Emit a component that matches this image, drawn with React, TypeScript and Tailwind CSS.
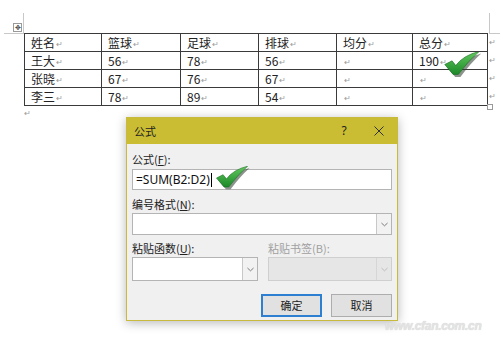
import React from "react";

const P = () => <span className="text-[8px] text-[#9a9a9a] align-middle ml-[1px]">↵</span>;

function Check({ className }: { className: string }) {
  return (
    <svg viewBox="0 0 36 24" className={className}>
      <defs>
        <linearGradient id="g" x1="0" y1="0" x2="0" y2="1">
          <stop offset="0" stopColor="#62c85e" />
          <stop offset="1" stopColor="#1c8a28" />
        </linearGradient>
      </defs>
      <path d="M1 13 L8 9.5 L11.5 14 Q19 4 34 0 Q24 9 14 22.5 L9 22.5 Z" fill="#2d3b2d" opacity="0.55" transform="translate(1.5 1.5)" />
      <path d="M0.5 12 L7.5 8.5 L11 13 Q18.5 3 33.5 -0.5 Q23.5 8 13.5 21.5 L8.5 21.5 Z" fill="url(#g)" stroke="#176d1f" strokeWidth="0.6" />
    </svg>
  );
}

const cols = [77, 79, 78, 78, 76, 75];
const rows = [
  ["姓名", "篮球", "足球", "排球", "均分", "总分"],
  ["王大", "56", "78", "56", "", "190"],
  ["张晓", "67", "76", "67", "", ""],
  ["李三", "78", "89", "54", "", ""],
];

function Arrow({ disabled }: { disabled?: boolean }) {
  return (
    <div className={`w-[15px] h-full border-l flex items-center justify-center ${disabled ? "border-[#d6d6d6] bg-[#e6e6e6]" : "border-[#c8c8c8] bg-[#f2f2f2]"}`}>
      <svg viewBox="0 0 8 5" className="w-[7px] h-[5px]">
        <path d="M0.5 0.8 L4 4 L7.5 0.8" fill="none" stroke={disabled ? "#b8b8b8" : "#6b6b6b"} strokeWidth="1" />
      </svg>
    </div>
  );
}

export default function App() {
  return (
    <div className="relative w-[500px] h-[343px] bg-white overflow-hidden text-[#222]" style={{ fontFamily: '"Noto Sans", "Noto Sans CJK SC", sans-serif' }}>
      {/* top corner marks */}
      <div className="absolute left-[4px] top-[33px] w-[20px] h-px bg-[#c8c8c8]" />
      <div className="absolute left-[23px] top-[13px] w-px h-[20px] bg-[#c8c8c8]" />
      <div className="absolute left-[489px] top-[13px] w-px h-[20px] bg-[#c8c8c8]" />
      <div className="absolute left-[489px] top-[33px] w-[11px] h-px bg-[#c8c8c8]" />
      {/* move handle */}
      <div className="absolute left-[13px] top-[23px] w-[9px] h-[9px] border border-[#9a9a9a] bg-white flex items-center justify-center text-[7px] leading-none text-[#444]">✥</div>

      <div className="pt-[33px] pl-[24px]">
        <div className="flex items-start">
          <table className="border-collapse text-[12px] leading-none" style={{ fontFamily: '"Noto Sans CJK SC", sans-serif' }}>
            <tbody>
              {rows.map((r, i) => (
                <tr key={i} className="h-[18px]">
                  {r.map((c, j) => (
                    <td key={j} style={{ width: cols[j] }} className="border border-[#3a3a3a] pl-[6px] p-0 align-middle">
                      {c}
                      <P />
                    </td>
                  ))}
                </tr>
              ))}
            </tbody>
          </table>
          <div className="flex flex-col ml-[1px] text-[8px] text-[#9a9a9a] leading-[18px]">
            <span>↵</span>
            <span>↵</span>
            <span>↵</span>
            <span>↵</span>
          </div>
        </div>
        <div className="text-[8px] text-[#9a9a9a] leading-none mt-[3px]">↵</div>
      </div>
      <div className="absolute left-[487px] top-[104px] w-[6px] h-[6px] border border-[#9a9a9a] bg-white" />

      <Check className="absolute left-[444px] top-[52px] w-[38px] h-[25px]" />

      {/* dialog */}
      <div className="absolute left-[126px] top-[117px] w-[272px] h-[204px] bg-[#f0f0f0] border border-[#c7ba3c] shadow-[0_2px_10px_rgba(0,0,0,0.28)] flex flex-col text-[11px]" style={{ fontFamily: '"Noto Sans CJK SC", sans-serif' }}>
        <div className="h-[26px] bg-[#cbbd33] flex items-center pl-[7px] pr-[13px] text-[11px] text-[#222]">
          <span className="flex-1">公式</span>
          <span className="w-[14px] text-center mr-[23px] text-[12px]" style={{ fontFamily: '"Noto Sans", sans-serif' }}>?</span>
          <svg viewBox="0 0 10 10" className="w-[10px] h-[10px]">
            <path d="M0.5 0.5 L9.5 9.5 M9.5 0.5 L0.5 9.5" stroke="#333" strokeWidth="1" />
          </svg>
        </div>
        <div className="flex flex-col px-[5px]">
          <div className="mt-[9px] h-[12px] leading-[12px]">公式(<span className="underline">F</span>):</div>
          <div className="mt-[4px] h-[21px] bg-white border border-[#b4b4b4] flex items-center pl-[3px] text-[12px] text-[#111]" style={{ fontFamily: '"Noto Sans", sans-serif' }}>
            =SUM(B2:D2)<span className="inline-block w-px h-[14px] bg-black ml-[1px]" />
          </div>
          <div className="mt-[8px] h-[12px] leading-[12px]">编号格式(<span className="underline">N</span>):</div>
          <div className="mt-[3px] h-[22px] bg-white border border-[#b4b4b4] flex justify-end">
            <Arrow />
          </div>
          <div className="mt-[7px] flex h-[12px] leading-[12px]">
            <div className="w-[136px]">粘贴函数(<span className="underline">U</span>):</div>
            <div className="text-[#a0a0a0]">粘贴书签(B):</div>
          </div>
          <div className="mt-[3px] flex gap-[10px] h-[24px]">
            <div className="w-[126px] bg-white border border-[#b4b4b4] flex justify-end">
              <Arrow />
            </div>
            <div className="flex-1 bg-[#e6e6e6] border border-[#cfcfcf] flex justify-end">
              <Arrow disabled />
            </div>
          </div>
          <div className="mt-[13px] flex justify-end gap-[9px]">
            <div className="w-[61px] h-[23px] bg-[#e1e1e1] border-2 border-[#2d7fd1] flex items-center justify-center">确定</div>
            <div className="w-[61px] h-[23px] bg-[#e1e1e1] border border-[#adadad] flex items-center justify-center">取消</div>
          </div>
        </div>
      </div>

      <Check className="absolute left-[216px] top-[166px] w-[34px] h-[24px]" />

      <div className="absolute left-[385px] top-[319px] text-[12px] leading-[14px] italic font-bold tracking-tight text-[#e3e3e3]" style={{ fontFamily: '"Liberation Sans", sans-serif', textShadow: "0 0 1px #cfcfcf" }}>
        www.cfan.com.cn
      </div>
    </div>
  );
}
